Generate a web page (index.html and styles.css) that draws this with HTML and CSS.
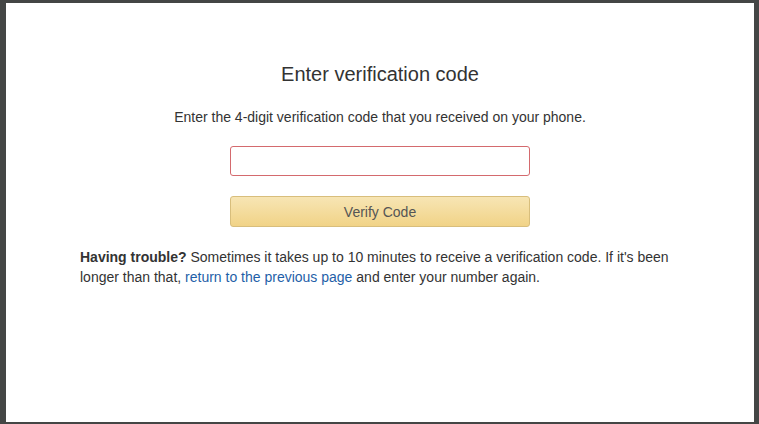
FILE: index.html
```html
<!DOCTYPE html>
<html>
<head>
<meta charset="utf-8">
<link rel="stylesheet" href="styles.css">
</head>
<body>
<div class="page">
  <div class="content">
    <h1 class="title">Enter verification code</h1>
    <p class="intro">Enter the 4-digit verification code that you received on your phone.</p>
    <div class="form">
      <input class="code-input" type="text">
      <button class="verify-btn">Verify Code</button>
    </div>
    <p class="help"><b>Having trouble?</b> Sometimes it takes up to 10 minutes to receive a verification code. If it's been longer than that, <a href="#" class="link">return to the previous page</a> and enter your number again.</p>
  </div>
</div>
</body>
</html>
```
FILE: styles.css
```css
html, body {
  margin: 0;
  padding: 0;
}
body {
  background: #444645;
  height: 424px;
  overflow: hidden;
  font-family: Arial, "Liberation Sans", sans-serif;
  color: #333;
}
.page {
  background: #fff;
  margin: 3px 5px 0 6px;
  height: 419px;
  display: flex;
  justify-content: center;
}
.content {
  width: 600px;
  padding-top: 59px;
}
.title {
  margin: 0;
  font-size: 20px;
  font-weight: normal;
  text-align: center;
  line-height: 24px;
}
.intro {
  margin: 22px 0 0;
  font-size: 14px;
  line-height: 18px;
  text-align: center;
}
.form {
  width: 300px;
  margin: 20px auto 0;
  display: flex;
  flex-direction: column;
  gap: 20px;
}
.code-input {
  box-sizing: border-box;
  width: 300px;
  height: 30px;
  margin: 0;
  border: 1px solid #d46a6e;
  border-radius: 3px;
  outline: none;
  padding: 0 8px;
  font-size: 14px;
  font-family: inherit;
}
.verify-btn {
  box-sizing: border-box;
  width: 300px;
  height: 31px;
  margin: 0;
  border: 1px solid #d8be7c;
  border-radius: 3px;
  background: linear-gradient(to bottom, #f7e5b4, #f1d387);
  color: #555;
  font-size: 14px;
  font-family: inherit;
  padding: 0;
}
.help {
  margin: 20px 0 0;
  font-size: 14px;
  line-height: 20px;
}
.help b {
  color: #333;
}
.link {
  color: #1f5fa8;
  text-decoration: none;
}
```
